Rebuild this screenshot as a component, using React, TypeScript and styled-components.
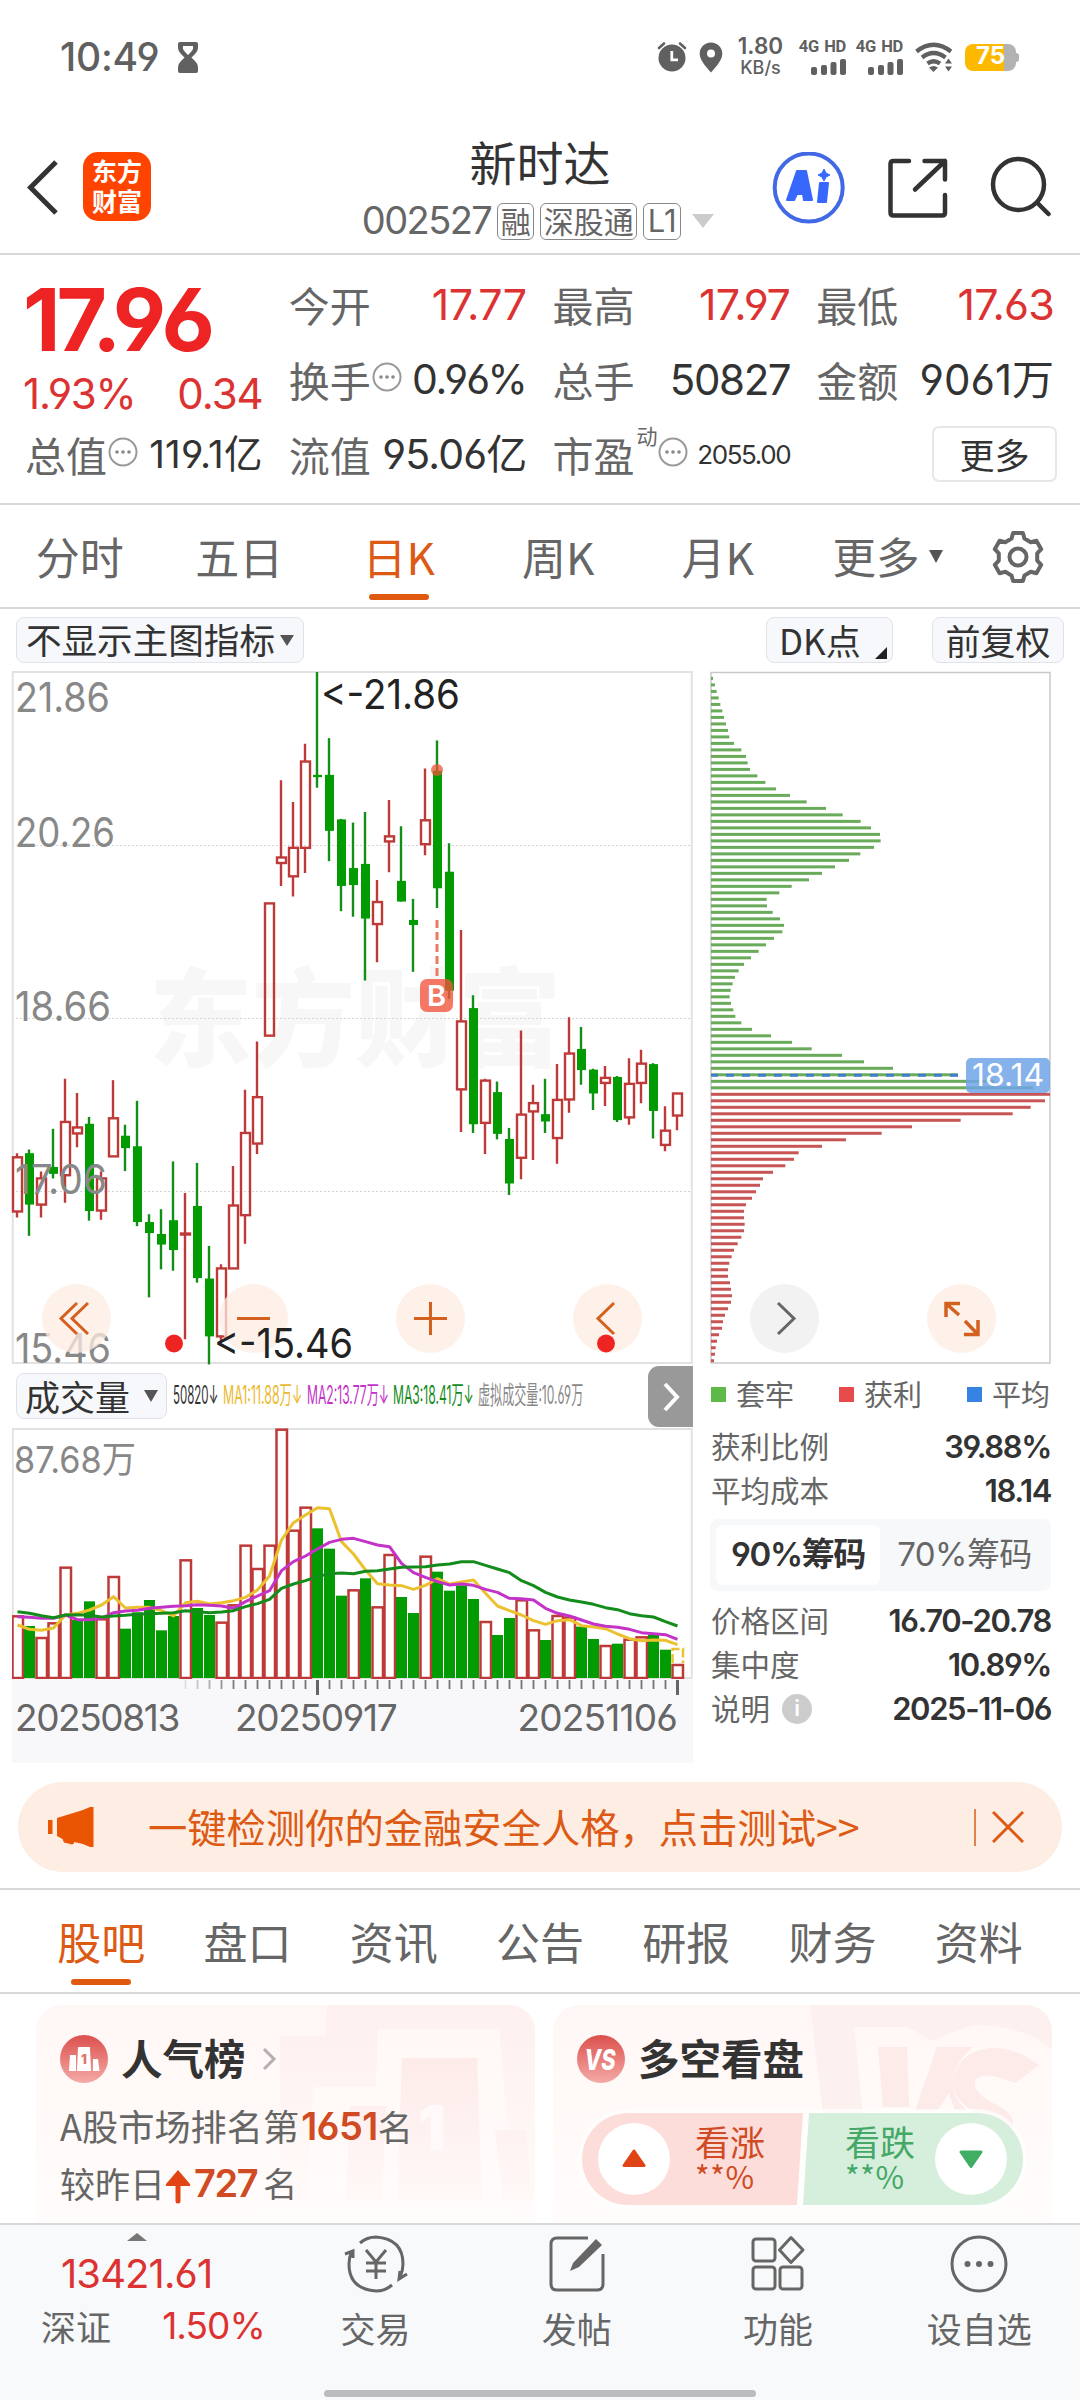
import React from "react";
import styled, { createGlobalStyle } from "styled-components";

const Global = createGlobalStyle`
  * { box-sizing: border-box; }
  body { margin: 0; background: #fff; }
`;

const CN = `"Noto Sans CJK SC", "Noto Sans", sans-serif`;
const LATIN = `Inter, "Noto Sans CJK SC", sans-serif`;

/* ---------- shared pieces ---------- */

const Page = styled.div`
  width: 1080px;
  height: 2400px;
  display: flex;
  flex-direction: column;
  background: #fff;
  overflow: hidden;
  font-family: ${CN};
  color: #333;
`;

const Text = styled.span<{ $size: number; $color?: string; $weight?: number; $ls?: number }>`
  font-family: ${CN};
  font-size: ${(p) => p.$size}px;
  font-weight: ${(p) => p.$weight ?? 400};
  color: ${(p) => p.$color ?? "#666"};
  letter-spacing: ${(p) => p.$ls ?? 0}px;
  line-height: 1;
  padding-bottom: 2px;
  white-space: nowrap;
`;

const Num = styled(Text)`
  font-family: ${LATIN};
  font-feature-settings: "cv03", "cv04";
`;

const Caret = styled.i<{ $w: number; $h: number; $color: string; $up?: boolean }>`
  width: 0;
  height: 0;
  border-left: ${(p) => p.$w / 2}px solid transparent;
  border-right: ${(p) => p.$w / 2}px solid transparent;
  ${(p) => (p.$up ? "border-bottom" : "border-top")}: ${(p) => p.$h}px solid ${(p) => p.$color};
`;

const Chip = styled.button<{ $w: number }>`
  width: ${(p) => p.$w}px;
  height: 46px;
  padding: 0;
  display: flex;
  align-items: center;
  justify-content: center;
  gap: 5px;
  background: #f7f8fb;
  border: 1.5px solid #e2e3e9;
  border-radius: 8px;
`;

/* ---------- status bar ---------- */

const StatusBar = styled.div`
  height: 116px;
  padding: 34px 64px 0 60px;
  display: flex;
  justify-content: space-between;
`;

const StatusSide = styled.div`
  height: 46px;
  display: flex;
  align-items: center;
`;

const Speed = styled.div`
  width: 47px;
  margin-left: 14px;
  display: flex;
  flex-direction: column;
  align-items: center;
`;

const Signal = styled.div`
  width: 48px;
  margin-left: 14px;
  & + & { margin-left: 9px; }
  display: flex;
  flex-direction: column;
  align-items: flex-end;
  gap: 1px;
`;

const Net = styled(Num)`
  font-family: Roboto, Inter, sans-serif;
  word-spacing: 1.5px;
`;

const SignalMark = () => (
  <Signal>
    <Net $size={16.5} $weight={700} $color="#606060" $ls={-0.3}>4G HD</Net>
    <svg width="35" height="16" fill="#606060">
      <rect x="0" y="8" width="6" height="8" rx="2" />
      <rect x="10" y="6" width="6" height="10" rx="2" />
      <rect x="19.500" y="3" width="6" height="13" rx="2" />
      <rect x="29" y="0" width="6" height="16" rx="2" />
    </svg>
  </Signal>
);

const Battery = styled.div`
  width: 51px;
  height: 27px;
  margin-left: 12px;
  border-radius: 8px;
  background: linear-gradient(90deg, #fcb900 39px, #b2b2b2 39px);
  display: flex;
  align-items: center;
  justify-content: center;
  position: relative;
  &::after {
    content: "";
    position: absolute;
    right: -3px;
    top: 9px;
    width: 3px;
    height: 9px;
    border-radius: 0 3px 3px 0;
    background: #b2b2b2;
  }
`;

function Status() {
  return (
    <StatusBar>
      <StatusSide>
        <Num $size={39} $weight={500} $color="#606060" $ls={-0.2}>10:49</Num>
        <svg width="20" height="31" viewBox="0 0 20 31" style={{ marginLeft: 19 }}>
          <path d="M2 0h16q2 0 2 2v4q0 3-3 6l-3.500 3.500 3.500 3.500q3 3 3 6v4q0 2-2 2H2q-2 0-2-2v-4q0-3 3-6l3.500-3.500L3 12Q0 9 0 6V2Q0 0 2 0z" fill="#606060" />
          <path d="M5 4h10v2.500q0 1.500-5 6.500Q5 8 5 6.500z" fill="#fff" />
        </svg>
      </StatusSide>
      <StatusSide>
        <svg width="30" height="30" viewBox="0 0 30 30" fill="#606060">
          <circle cx="15" cy="16" r="13.500" />
          <path d="M2 6l5-4.500M28 6l-5-4.500" stroke="#606060" strokeWidth="2.600" strokeLinecap="round" />
          <path d="M14.800 9v8.800H21" stroke="#fff" strokeWidth="2.800" fill="none" />
        </svg>
        <svg width="24" height="31" viewBox="0 0 24 31" style={{ marginLeft: 12 }}>
          <path d="M12 .5C5.500.5.700 5.500.700 11.500.700 18 6 23.500 12 30.500 18 23.500 23.300 18 23.300 11.500 23.300 5.500 18.500.5 12 .5z" fill="#606060" />
          <circle cx="12" cy="11.500" r="4" fill="#fff" />
        </svg>
        <Speed>
          <Num $size={22.5} $weight={600} $color="#606060">1.80</Num>
          <Num $size={18} $weight={500} $color="#606060">KB/s</Num>
        </Speed>
        <SignalMark />
        <SignalMark />
        <svg width="38" height="30" viewBox="0 0 38 30" style={{ marginLeft: 12 }}>
          <g fill="none" stroke="#606060" strokeWidth="4.200">
            <path d="M1.500 9.500Q18.500-4 36 9.500" />
            <path d="M7 15.500Q18.500 6.500 30.500 15.500" />
            <path d="M12.500 21.500Q18.500 17 25 21.500" />
          </g>
          <path d="M14 25.500Q18.500 22.500 23 25.500L18.500 30z" fill="#606060" />
          <path d="M30 21.500l3.500-5 3.500 5zM30 24.500l3.500 5 3.500-5z" fill="#606060" />
        </svg>
        <Battery>
          <Num $size={24} $weight={700} $color="#fff">75</Num>
        </Battery>
      </StatusSide>
    </StatusBar>
  );
}

/* ---------- header ---------- */

const HeaderBar = styled.header`
  height: 139px;
  display: grid;
  grid-template-columns: 308px 1fr 308px;
  border-bottom: 2px solid #d9d9d9;
`;

const HeaderLeft = styled.div`
  padding: 36px 0 0 27px;
  display: flex;
  align-items: flex-start;
  gap: 24px;
`;

const Logo = styled.div`
  width: 68px;
  height: 69px;
  border-radius: 15px;
  background: #ff4400;
  display: flex;
  flex-direction: column;
  align-items: center;
  justify-content: center;
  gap: 3px;
`;

const HeaderTitle = styled.div`
  display: flex;
  flex-direction: column;
  align-items: center;
  padding-top: 21px;
`;

const CodeRow = styled.div`
  height: 38px;
  margin-top: 16px;
  margin-left: -4px;
  display: flex;
  align-items: center;
  gap: 6px;
`;

const Tag = styled.div<{ $w: number }>`
  width: ${(p) => p.$w}px;
  height: 37px;
  border: 1.5px solid #888;
  border-radius: 6px;
  display: flex;
  align-items: center;
  justify-content: center;
`;

const HeaderActions = styled.div`
  padding: 36px 29px 0 0;
  display: flex;
  justify-content: flex-end;
  align-items: flex-start;
`;

function Header() {
  return (
    <HeaderBar>
      <HeaderLeft>
        <svg width="32" height="70" viewBox="0 0 32 70">
          <path d="M29 10L3.500 35.500 29 61" fill="none" stroke="#333" strokeWidth="5" />
        </svg>
        <Logo>
          <Text $size={25} $weight={700} $color="#fff">东方</Text>
          <Text $size={25} $weight={700} $color="#fff">财富</Text>
        </Logo>
      </HeaderLeft>
      <HeaderTitle>
        <Text $size={47} $color="#333">新时达</Text>
        <CodeRow>
          <Num $size={38} $ls={-1.6}>002527</Num>
          <Tag $w={37}><Text $size={30}>融</Text></Tag>
          <Tag $w={97}><Text $size={30}>深股通</Text></Tag>
          <Tag $w={38}><Num $size={31}>L1</Num></Tag>
          <Caret $w={23} $h={14} $color="#ccc" style={{ marginLeft: 5 }} />
        </CodeRow>
      </HeaderTitle>
      <HeaderActions>
        <svg width="279" height="74" viewBox="0 0 279 74" fill="none">
          <circle cx="36.700" cy="35.500" r="34" stroke="#4169e6" strokeWidth="4" />
          <g fill="#3767fb" stroke="#3767fb" strokeWidth="2" strokeLinejoin="round">
            <path fillRule="evenodd" d="M25 19h9l6 29h-8l-1-6h-6l-3 6h-7zM28 36h2.500l-1-8z" />
            <path d="M48 31h8l-2 19h-8z" />
            <path d="M52 17l2 4 4 2-4 2-2 4-2-4-4-2 4-2z" strokeWidth="1" />
          </g>
          <g stroke="#333" strokeWidth="4.500" strokeLinecap="round" strokeLinejoin="round">
            <path d="M137 9h-15.500q-3 0-3 3v48.500q0 3 3 3h48.500q3 0 3-3V43" />
            <path d="M152.500 9H173v18.500M173 9l-30 28.500" />
            <circle cx="246.500" cy="32.500" r="25.500" />
            <path d="M266 51.500L276.500 62" />
          </g>
        </svg>
      </HeaderActions>
    </HeaderBar>
  );
}

/* ---------- quote summary ---------- */

const Quote = styled.section`
  height: 250px;
  padding: 13px 26px 0;
  display: grid;
  grid-template-columns: repeat(4, 1fr);
  grid-template-rows: 75px 75px 75px;
  column-gap: 27px;
  border-bottom: 2px solid #d9d9d9;
`;

const PriceBox = styled.div`
  grid-row: 1 / span 2;
  display: flex;
  flex-direction: column;
  justify-content: space-between;
  margin-left: -3px;
  padding: 8px 0 1px;
`;

const Cell = styled.div`
  display: flex;
  align-items: center;
  justify-content: space-between;
`;

const LabelGroup = styled.div`
  display: flex;
  align-items: center;
  margin-left: -1px;
`;

const Sup = styled.div`
  align-self: flex-start;
  margin-top: -9px;
  margin-left: 2px;
  width: 20px;
  line-height: 1;
`;

const More = styled.button`
  justify-self: end;
  align-self: center;
  width: 125px;
  height: 56px;
  margin: -4px -3px 0 0;
  padding: 0;
  background: #fff;
  border: 2px solid #e7e7e9;
  border-radius: 7px;
`;

const Hint = () => (
  <svg width="30" height="30" viewBox="0 0 30 30" style={{ marginTop: -8, marginLeft: 1 }}>
    <circle cx="15" cy="15" r="13.500" fill="none" stroke="#999" strokeWidth="2" />
    <g fill="#888"><circle cx="9" cy="15" r="1.800" /><circle cx="15" cy="15" r="1.800" /><circle cx="21" cy="15" r="1.800" /></g>
  </svg>
);

const RED = "#dc3232";

const Label = ({ children }: { children: string }) => (
  <LabelGroup><Text $size={41}>{children}</Text></LabelGroup>
);

function QuotePanel() {
  return (
    <Quote>
      <PriceBox>
        <Num $size={87} $weight={700} $color="#ee2424" $ls={-4}>17.96</Num>
        <Cell>
          <Num $size={42} $color={RED} $ls={-1.2}>1.93%</Num>
          <Num $size={42} $color={RED} $ls={-1}>0.34</Num>
        </Cell>
      </PriceBox>
      <Cell><Label>今开</Label><Num $size={43} $color={RED} $ls={-0.6}>17.77</Num></Cell>
      <Cell><Label>最高</Label><Num $size={43} $color={RED} $ls={-0.6}>17.97</Num></Cell>
      <Cell><Label>最低</Label><Num $size={43} $color={RED} $ls={-0.8}>17.63</Num></Cell>
      <Cell>
        <LabelGroup><Text $size={41}>换手</Text><Hint /></LabelGroup>
        <Num $size={41} $color="#333" $ls={-1.2}>0.96%</Num>
      </Cell>
      <Cell><Label>总手</Label><Num $size={42} $color="#333" $ls={-1.4}>50827</Num></Cell>
      <Cell><Label>金额</Label><Num $size={42} $color="#333" $ls={0}>9061万</Num></Cell>
      <Cell>
        <LabelGroup><Text $size={41}>总值</Text><Hint /></LabelGroup>
        <Num $size={38.5} $color="#333" $ls={0.3}>119.1亿</Num>
      </Cell>
      <Cell><Label>流值</Label><Num $size={41} $color="#333" $ls={-0.8}>95.06亿</Num></Cell>
      <Cell>
        <LabelGroup>
          <Text $size={41}>市盈</Text>
          <Sup><Text $size={21}>动</Text></Sup>
          <Hint />
        </LabelGroup>
        <Num $size={26} $color="#333" $ls={-1.4}>2055.00</Num>
      </Cell>
      <More><Text $size={35} $color="#333">更多</Text></More>
    </Quote>
  );
}

/* ---------- period tabs ---------- */

const PeriodBar = styled.nav`
  height: 104px;
  display: grid;
  grid-template-columns: repeat(5, 159.500px) 1fr 124px;
  border-bottom: 2px solid #d9d9d9;
`;

const Tab = styled.div<{ $on?: boolean }>`
  display: flex;
  flex-direction: column;
  align-items: center;
  padding-top: 29px;
  &::after {
    content: "";
    width: 60px;
    height: 6px;
    margin-top: 14px;
    border-radius: 3px;
    background: ${(p) => (p.$on ? "#df5a10" : "transparent")};
  }
`;

const TabMore = styled.div`
  display: flex;
  align-items: flex-start;
  gap: 9px;
  padding: 29px 0 0 35px;
`;

const GearBox = styled.div`
  padding: 25px 0 0 35px;
`;

const ORANGE = "#dc5a14";

function gearPath() {
  const pts: string[] = [];
  for (let i = 0; i < 6; i++) {
    const a = (i * Math.PI) / 3 - Math.PI / 2;
    const at = (r: number, d: number) => `${(27 + r * Math.cos(a + d)).toFixed(1)} ${(27 + r * Math.sin(a + d)).toFixed(1)}`;
    pts.push(at(19.5, -0.34), at(24.5, -0.2), at(24.5, 0.2), at(19.5, 0.34));
  }
  return `M${pts.join("L")}Z`;
}

function Periods() {
  return (
    <PeriodBar>
      {["分时", "五日", "日K", "周K", "月K"].map((t) => (
        <Tab key={t} $on={t === "日K"}>
          <Text $size={44} $color={t === "日K" ? ORANGE : "#666"}>{t}</Text>
        </Tab>
      ))}
      <TabMore>
        <Text $size={43.5}>更多</Text>
        <Caret $w={15} $h={13} $color="#555" style={{ marginTop: 16 }} />
      </TabMore>
      <GearBox>
        <svg width="54" height="54" fill="none" stroke="#666" strokeWidth="4" strokeLinejoin="round">
          <path d={gearPath()} />
          <circle cx="27" cy="27" r="8.500" />
        </svg>
      </GearBox>
    </PeriodBar>
  );
}

/* ---------- chart toolbar ---------- */

const Toolbar = styled.div`
  height: 62px;
  padding: 8px 16px 0;
  display: flex;
  align-items: flex-start;
`;

const Spacer = styled.div`
  flex: 1;
`;

/* ---------- charts ---------- */

const Charts = styled.section`
  height: 1092px;
  padding: 0 12px;
  display: flex;
  gap: 17px;
`;

const LeftColumn = styled.div`
  width: 681px;
  flex: none;
  display: flex;
  flex-direction: column;
`;

const Plot = styled.div<{ $h: number }>`
  height: ${(p) => p.$h}px;
  position: relative;
  flex: none;
  svg { display: block; }
`;

const RoundButton = styled.button<{ $x: number; $grey?: boolean }>`
  position: absolute;
  left: ${(p) => p.$x}px;
  bottom: 11px;
  width: 69px;
  height: 69px;
  padding: 0;
  border: 0;
  border-radius: 50%;
  background: ${(p) => (p.$grey ? "#f2f2f2" : "rgba(254, 236, 225, 0.75)")};
  svg { display: block; fill: none; stroke: ${(p) => (p.$grey ? "#666" : "#d4601f")}; stroke-width: 3px; }
`;

type Candle = ["r" | "g", number, number, number, number];

/* colour, high, body top, body bottom, low */
const candles: Candle[] = [
  ["r", 1074, 1083, 1201, 1214], ["g", 1066, 1074, 1186, 1254], ["r", 1114, 1129, 1186, 1214], ["g", 1021, 1104, 1119, 1129],
  ["r", 912, 1006, 1122, 1182], ["r", 943, 1018, 1031, 1061], ["g", 995, 1010, 1200, 1221], ["r", 1114, 1129, 1199, 1219],
  ["r", 915, 998, 1081, 1081], ["g", 1012, 1036, 1063, 1113], ["g", 960, 1059, 1224, 1233], ["g", 1207, 1224, 1248, 1388],
  ["g", 1196, 1250, 1273, 1327], ["g", 1092, 1220, 1285, 1330], ["r", 1161, 1249, 1251, 1479], ["g", 1095, 1189, 1346, 1356],
  ["g", 1276, 1347, 1473, 1534], ["r", 1316, 1325, 1473, 1487], ["r", 1102, 1188, 1325, 1325], ["r", 936, 1030, 1209, 1271],
  ["r", 831, 952, 1053, 1076], ["r", 530, 530, 818, 818], ["r", 262, 430, 442, 492], ["r", 309, 409, 471, 515],
  ["r", 182, 221, 409, 464], ["g", 26, 250, 255, 278], ["g", 170, 250, 372, 438], ["g", 346, 347, 492, 547],
  ["g", 354, 453, 490, 559], ["g", 331, 444, 563, 698], ["r", 479, 527, 575, 658], ["r", 305, 384, 395, 462],
  ["g", 362, 481, 526, 526], ["g", 520, 566, 577, 679], ["r", 236, 349, 401, 425], ["g", 175, 241, 497, 540],
  ["g", 399, 461, 720, 738], ["r", 588, 787, 935, 1028], ["g", 730, 758, 1011, 1030], ["r", 912, 916, 1008, 1076],
  ["g", 918, 941, 1032, 1044], ["g", 1019, 1043, 1140, 1165], ["r", 807, 990, 1084, 1131], ["r", 925, 965, 983, 1089],
  ["g", 912, 989, 1005, 1030], ["r", 880, 958, 1041, 1097], ["r", 778, 857, 957, 986], ["g", 799, 847, 893, 925],
  ["g", 890, 892, 944, 980], ["r", 884, 910, 921, 971], ["g", 906, 908, 1002, 1006], ["r", 867, 923, 996, 1012],
  ["r", 849, 879, 921, 965], ["g", 878, 880, 982, 1042], ["r", 972, 1025, 1056, 1070], ["r", 943, 944, 992, 1024],
];

const priceY = (v: number) => (v - 26) / 2.178 + 1;

const gridLabels: [string, number, number][] = [
  ["21.86", 40.5, 93], ["20.26", 175.5, 98], ["18.66", 349.5, 94], ["17.06", 523, 90], ["15.46", 692, 94],
];

const Overlay = styled.svg`
  position: absolute;
  left: 0;
  top: 0;
  overflow: visible;
  pointer-events: none;
`;

function PriceChart() {
  return (
    <Plot $h={693}>
      <svg width="681" height="693" fontFamily={LATIN} style={{ overflow: "visible" }}>
        <text x="137" y="387" fontSize="107" fontWeight="900" fontFamily={CN} fill="#f7f7f7" textLength="412" lengthAdjust="spacingAndGlyphs">东方财富</text>
        {[174, 347, 520].map((y) => (
          <line key={y} x1="0" x2="680" y1={y + 0.5} y2={y + 0.5} stroke="#d4d4d4" strokeDasharray="2 2" />
        ))}
        <rect x="0.750" y="1" width="679" height="691" fill="none" stroke="#e2e2e4" strokeWidth="2" />
        {candles.map(([c, hi, top, bot, lo], i) => {
          const x = 5 + i * 12;
          const t = priceY(top), b = priceY(bot);
          return c === "g" ? (
            <g key={i} fill="#029c02">
              <rect x={x - 1.2} y={priceY(hi)} width="2.400" height={priceY(lo) - priceY(hi)} fill="#128f16" />
              <rect x={x - 4} y={t} width="9" height={b - t} />
            </g>
          ) : (
            <g key={i} stroke="#be3a38" strokeWidth="2.400" fill="none">
              <path d={`M${x} ${priceY(hi)}V${t}M${x} ${b}V${priceY(lo)}`} />
              <rect x={x - 4} y={t} width="9" height={Math.max(b - t, 1)} />
            </g>
          );
        })}
        {gridLabels.map(([t, y, w]) => (
          <text key={t} x="3" y={y} fontSize="41" fill="#888" textLength={w + 2} lengthAdjust="spacingAndGlyphs">{t}</text>
        ))}
        <text x="309" y="38" fontSize="41" fill="#222" textLength="139" lengthAdjust="spacingAndGlyphs">&lt;-21.86</text>
        <circle cx="425" cy="99" r="6" fill="#ee5535" opacity=".75" />
        <path d="M425 249v56" stroke="#ee7a66" strokeWidth="3" strokeDasharray="8 4" />
        <rect x="408" y="308" width="33" height="33" rx="7" fill="#f4533d" opacity=".78" />
        <text x="424.500" y="335" fontSize="29" fontWeight="600" fill="#fff" textAnchor="middle">B</text>
      </svg>
      <RoundButton $x={30}><svg width="69" height="69"><path d="M35 19L19 34.500 35 50M46 19L30 34.500 46 50" /></svg></RoundButton>
      <RoundButton $x={207}><svg width="69" height="69"><path d="M18 34.500h33" /></svg></RoundButton>
      <RoundButton $x={384}><svg width="69" height="69"><path d="M18 34.500h33M34.500 18v33" /></svg></RoundButton>
      <RoundButton $x={561}><svg width="69" height="69"><path d="M41 19L25 34.500 41 50" /></svg></RoundButton>
      <Overlay width="681" height="693" fontFamily={LATIN}>
        <text x="202" y="687" fontSize="41" fill="#222" textLength="139" lengthAdjust="spacingAndGlyphs">&lt;-15.46</text>
        <circle cx="162" cy="672.500" r="9" fill="#ee2422" />
        <circle cx="594" cy="672.500" r="9" fill="#ee2422" />
      </Overlay>
    </Plot>
  );
}

const IndicatorRow = styled.div`
  height: 64px;
  padding-left: 4px;
  display: flex;
  align-items: center;
`;

const Squeezed = styled.div<{ $w: number; $k: number }>`
  width: ${(p) => p.$w}px;
  margin-left: 6px;
  flex: none;
  & > span {
    display: inline-block;
    transform: scaleX(${(p) => p.$k});
    transform-origin: left center;
  }
`;

const NextTab = styled.button`
  align-self: stretch;
  width: 45px;
  margin: 2px 0 1px auto;
  padding: 0;
  border: 0;
  border-radius: 11px 0 0 11px;
  background: #999;
  position: relative;
  svg { display: block; margin: auto; }
`;

const volumes =
  "r766 g798 r831 r787 r620 g780 g724 r775 r648 g806 g757 g720 g811 g768 r598 g744 g765 r785 r733 r554 r624 r554 r206 r509 r440 g505 g566 g707 r688 g655 r739 r582 g711 g759 r587 g635 g692 g676 g717 r783 g825 g774 r718 r808 g840 r765 r770 g800 g837 r855 g851 r836 r829 g824 g869 r912"
    .split(" ")
    .map((s) => ({ up: s[0] === "r", v: Number(s.slice(1)) }));

const averages: [string, number[]][] = [
  ["#ecc12f", [795, 808, 811, 804, 765, 760, 750, 735, 710, 744, 742, 742, 752, 768, 728, 724, 732, 728, 722, 712, 690, 648, 540, 488, 465, 443, 446, 545, 582, 630, 671, 675, 677, 688, 676, 656, 672, 666, 660, 700, 738, 752, 765, 782, 793, 782, 779, 797, 801, 806, 822, 836, 842, 840, 841, 854]],
  ["#c433c8", [770, 772, 775, 775, 765, 779, 779, 775, 758, 753, 751, 745, 742, 739, 737, 734, 736, 738, 745, 725, 708, 692, 632, 605, 588, 567, 547, 538, 535, 545, 555, 560, 610, 638, 652, 665, 675, 672, 676, 688, 697, 715, 716, 720, 745, 760, 768, 780, 792, 799, 802, 808, 818, 821, 824, 838]],
  ["#148c1c", [755, 760, 767, 773, 765, 764, 766, 771, 768, 766, 763, 761, 760, 758, 752, 755, 758, 756, 752, 740, 731, 718, 685, 672, 662, 650, 641, 639, 641, 634, 632, 627, 622, 621, 620, 615, 612, 605, 605, 616, 627, 638, 662, 677, 697, 711, 720, 726, 733, 743, 749, 761, 767, 771, 785, 798]],
];

const volY = (v: number) => (v - 204) / 3;

function VolumeChart() {
  return (
    <Plot $h={251}>
      <svg width="681" height="251" fontFamily={LATIN}>
        <rect x="0.750" y="1" width="679" height="249" fill="none" stroke="#e2e2e4" strokeWidth="2" />
        <text x="2" y="44.500" fontSize="37" fill="#888" textLength="122" lengthAdjust="spacingAndGlyphs">87.68万</text>
        {volumes.map(({ up, v }, i) => {
          const x = 5.5 + i * 12;
          return up ? (
            <rect key={i} x={x - 5} y={volY(v) + 1} width="10.500" height={249 - volY(v)} fill="#fff" stroke="#be3a38" strokeWidth="2.500" />
          ) : (
            <rect key={i} x={x - 5.5} y={volY(v)} width="11" height={250 - volY(v)} fill="#029c02" />
          );
        })}
        <path d="M660.500 235v-14h10.500v14" fill="none" stroke="#ecc12f" strokeWidth="2.500" strokeDasharray="9 3" />
        {averages.map(([c, vs]) => (
          <polyline key={c} fill="none" stroke={c} strokeWidth="3" strokeLinejoin="round"
            points={vs.map((v, i) => `${5.5 + i * 12},${volY(v)}`).join(" ")} />
        ))}
      </svg>
    </Plot>
  );
}

const Axis = styled.div`
  height: 84px;
  background: #f8f8fa;
  svg { display: block; }
`;

const AxisLabels = styled.div`
  display: flex;
  padding: 3px 16px 0 3px;
`;

function TimeAxis() {
  return (
    <Axis>
      <svg width="681" height="17">
        {volumes.map((_, i) => {
          if (i < 14) return null;
          const major = i === 25 || i === 55;
          return (
            <line key={i} x1={5.5 + i * 12} x2={5.5 + i * 12} y1="1" y2={major ? 16 : 10}
              stroke="#666" strokeWidth={major ? 3 : 1.8} opacity={major ? 1 : Math.min(0.9, (i - 13) * 0.17)} />
          );
        })}
      </svg>
      <AxisLabels>
        <Num $size={37} $ls={-1.4}>20250813</Num>
        <Num $size={37} $ls={-1.3} style={{ marginLeft: 56 }}>20250917</Num>
        <Spacer />
        <Num $size={37} $ls={-0.8}>20251106</Num>
      </AxisLabels>
    </Axis>
  );
}

/* ---------- chip distribution ---------- */

const RightColumn = styled.div`
  width: 341px;
  flex: none;
  display: flex;
  flex-direction: column;
`;

const trapped = [69, 75, 80, 86, 91, 97, 102, 108, 114, 118, 132, 154, 168, 173, 180, 202, 226, 258, 300, 350, 408, 458, 512, 543, 570, 572, 552, 511, 477, 435, 396, 357, 305, 268, 230, 231, 248, 270, 282, 277, 252, 228, 206, 183, 162, 146, 135, 128, 122, 119, 123, 130, 136, 154, 186, 243, 306, 365, 456, 522, 609, 804, 912, 1029];
const profit = [1080, 1065, 1022, 968, 812, 666, 575, 468, 396, 326, 312, 286, 249, 219, 210, 198, 186, 168, 162, 162, 164, 162, 154, 143, 132, 125, 118, 114, 114, 120, 123, 126, 123, 114, 105, 99, 96, 87, 81, 77, 75, 72];

function ChipChart() {
  const bars = [...trapped, ...profit];
  return (
    <Plot $h={693}>
      <svg width="341" height="693" fontFamily={LATIN}>
        <rect x="1" y="1.500" width="339" height="690.500" fill="none" stroke="#c9c9cb" strokeWidth="1.500" />
        {bars.map((v, i) => (
          <rect key={i} x="1" y={priceY(40 + i * 14.153) - 1.5} width={(v - 63) / 3} height="3"
            fill={i < trapped.length ? "#69ab5a" : "#c85555"} />
        ))}
        <path d="M1 404.200h247" stroke="#3e80cc" strokeWidth="3" strokeDasharray="8 8" strokeDashoffset="1" />
        <rect x="256" y="387" width="84" height="35" rx="5" fill="#6fa3e8" opacity=".84" />
        <text x="262" y="415" fontSize="31" fill="#fff" textLength="72" lengthAdjust="spacingAndGlyphs">18.14</text>
      </svg>
      <RoundButton $x={40} $grey><svg width="69" height="69"><path d="M28 19l16 15.500L28 50" /></svg></RoundButton>
      <RoundButton $x={217}>
        <svg width="69" height="69"><path d="M19 33V19.500H33M19 19.500l13 11.500M38 37l13 13.500M51 36v14.500H37" strokeWidth="3.500" /></svg>
      </RoundButton>
    </Plot>
  );
}

const Legend = styled.div`
  height: 61px;
  padding: 0 1px 0 1px;
  display: flex;
  align-items: center;
  justify-content: space-between;
`;

const LegendItem = styled.div<{ $color: string }>`
  display: flex;
  align-items: center;
  gap: 10px;
  &::before {
    content: "";
    width: 15px;
    height: 15px;
    background: ${(p) => p.$color};
  }
`;

const InfoRow = styled.div`
  height: 44px;
  padding: 0 0 0 2px;
  display: flex;
  align-items: center;
  justify-content: space-between;
`;

const Segment = styled.div`
  height: 72px;
  margin: 6px 0 8px 0;
  padding: 6px;
  display: grid;
  grid-template-columns: 164px 1fr;
  border-radius: 8px;
  background: #f7f8fa;
`;

const SegmentItem = styled.div<{ $on?: boolean }>`
  padding-left: ${(p) => (p.$on ? 0 : 4)}px;
  display: flex;
  align-items: center;
  justify-content: center;
  border-radius: 7px;
  background: ${(p) => (p.$on ? "#fff" : "transparent")};
`;

const InfoBadge = styled.span`
  width: 30px;
  height: 30px;
  margin-left: 12px;
  border-radius: 50%;
  background: #ccc;
  display: flex;
  align-items: center;
  justify-content: center;
`;

function Row({ label, value, badge }: { label: string; value: string; badge?: boolean }) {
  return (
    <InfoRow>
      <LabelGroup>
        <Text $size={29.5}>{label}</Text>
        {badge && <InfoBadge><Num $size={22} $weight={600} $color="#fff">i</Num></InfoBadge>}
      </LabelGroup>
      <Num $size={31} $weight={600} $color="#333" $ls={-1.4}>{value}</Num>
    </InfoRow>
  );
}

function ChipPanel() {
  return (
    <RightColumn>
      <ChipChart />
      <Legend>
        <LegendItem $color="#5dba49"><Text $size={29}>套牢</Text></LegendItem>
        <LegendItem $color="#e84b4b"><Text $size={29}>获利</Text></LegendItem>
        <LegendItem $color="#3783e4"><Text $size={29}>平均</Text></LegendItem>
      </Legend>
      <Row label="获利比例" value="39.88%" />
      <Row label="平均成本" value="18.14" />
      <Segment>
        <SegmentItem $on><Num $size={33} $weight={600} $color="#333" $ls={-1.4}>90%筹码</Num></SegmentItem>
        <SegmentItem><Num $size={33} $ls={-0.6}>70%筹码</Num></SegmentItem>
      </Segment>
      <Row label="价格区间" value="16.70-20.78" />
      <Row label="集中度" value="10.89%" />
      <Row label="说明" value="2025-11-06" badge />
    </RightColumn>
  );
}

/* ---------- banner ---------- */

const Banner = styled.div`
  height: 90px;
  margin: 19px 18px 16px;
  padding: 0 38px 0 30px;
  border-radius: 45px;
  background: #fdede3;
  display: flex;
  align-items: center;
`;

const BannerText = styled(Text)`
  margin-left: 54px;
  flex: 1;
`;

const BannerRule = styled.i`
  width: 2px;
  height: 37px;
  margin-right: 16px;
  background: #e0824c;
`;

/* ---------- section tabs ---------- */

const SectionBar = styled.nav`
  height: 106px;
  padding: 0 28px;
  display: grid;
  grid-template-columns: repeat(7, 1fr);
  border-top: 2px solid #d9d9d9;
  border-bottom: 2px solid #d9d9d9;
`;

/* ---------- cards ---------- */

const Cards = styled.section`
  height: 229px;
  padding: 11px 28px 0 36px;
  display: grid;
  grid-template-columns: 1fr 1fr;
  gap: 18px;
  overflow: hidden;
`;

const Card = styled.div`
  height: 240px;
  padding: 30px 24px 0;
  border-radius: 26px;
  background: linear-gradient(180deg, #fff7f5, #fffdfc);
  position: relative;
  overflow: hidden;
`;

const CardArt = styled.svg`
  position: absolute;
  left: 0;
  top: 0;
`;

const CardHead = styled.div`
  height: 48px;
  display: flex;
  align-items: center;
  position: relative;
`;

const CardLine = styled.div`
  height: 57px;
  display: flex;
  align-items: center;
  position: relative;
`;

const CardTitle = styled(Text)`
  margin: 0 16px 0 13px;
`;

const Votes = styled.div`
  height: 100px;
  width: 449px;
  margin: 26px 0 0 1px;
  padding: 4px;
  border-radius: 50px;
  background: rgba(255, 255, 255, 0.7);
  display: flex;
  position: relative;
`;

const Vote = styled.div<{ $up?: boolean }>`
  width: ${(p) => (p.$up ? 221 : 226)}px;
  margin-left: ${(p) => (p.$up ? 0 : -6)}px;
  padding: ${(p) => (p.$up ? "0 0 0 16px" : "0 16px 0 48px")};
  border-radius: ${(p) => (p.$up ? "46px 0 0 46px" : "0 46px 46px 0")};
  clip-path: ${(p) => (p.$up ? "polygon(0 0, 100% 0, 215px 100%, 0 100%)" : "polygon(12px 0, 100% 0, 100% 100%, 6px 100%)")};
  background: ${(p) => (p.$up ? "#fdddd9" : "#d6eedc")};
  display: flex;
  align-items: center;
  justify-content: ${(p) => (p.$up ? "flex-start" : "space-between")};
  gap: ${(p) => (p.$up ? 25 : 0)}px;
`;

const VoteKnob = styled.div`
  width: 72px;
  height: 72px;
  border-radius: 50%;
  background: #fff;
  display: flex;
  align-items: center;
  justify-content: center;
  flex: none;
`;

const VoteText = styled.div`
  display: flex;
  flex-direction: column;
  margin-top: -3px;
`;

const VERMILION = "#d04a24";
const LEAF = "#45a867";

function RankCard() {
  return (
    <Card>
      <CardArt width="499" height="220">
        <defs>
          <linearGradient id="fade" x1="0" y1="0" x2="0" y2="1">
            <stop offset="0" stopColor="#fdebe9" />
            <stop offset="1" stopColor="#fff9f8" />
          </linearGradient>
        </defs>
        <g fill="url(#fade)">
          <path opacity=".55" d="M291 0H499V190H478L463 24H342L340 82H278L270 196H243L244 31H289z" />
          <path d="M314 101h36l-4 95h-36zM366 53h75l5 143h-85zM459 125h31l6 71h-29z" />
        </g>
        <text x="382" y="145" fontFamily={LATIN} fontSize="62" fontWeight="900" fill="#fffaf9">1</text>
      </CardArt>
      <CardHead>
        <svg width="48" height="48">
          <defs>
            <linearGradient id="medal" x1="0" y1="0" x2="0" y2="1">
              <stop offset="0" stopColor="#dc504d" />
              <stop offset="1" stopColor="#f4aaa6" />
            </linearGradient>
          </defs>
          <circle cx="24" cy="24" r="24" fill="url(#medal)" />
          <path d="M10 20h6v16H9zM18 12h12l1 24H17zM33 24h5l1.500 12H33z" fill="#fff" />
          <text x="24" y="29" fontFamily={LATIN} fontSize="13" fontWeight="900" fill="#e07570" textAnchor="middle">1</text>
        </svg>
        <CardTitle $size={41.5} $weight={700} $color="#333">人气榜</CardTitle>
        <svg width="16" height="24"><path d="M2 2l10 10L2 22" fill="none" stroke="#b5b0b0" strokeWidth="3" /></svg>
      </CardHead>
      <CardLine style={{ marginTop: 15 }}>
        <Text $size={36.2}>A股市场排名第</Text>
        <Num $size={38} $weight={600} $color={VERMILION} $ls={-0.6} style={{ marginLeft: 2 }}>1651</Num>
        <Text $size={35}>名</Text>
      </CardLine>
      <CardLine>
        <Text $size={35}>较昨日</Text>
        <svg width="26" height="34" fill="#e34416" style={{ marginTop: 6 }}><path d="M13 0L25 14q1 2-1.500 2H15.500v15q0 2.500-2.500 2.500T10.500 31V16H2.500Q0 16 1 14z" /></svg>
        <Num $size={38} $weight={600} $color={VERMILION} $ls={-1.4} style={{ margin: "0 6px 0 3px" }}>727</Num>
        <Text $size={34}>名</Text>
      </CardLine>
    </Card>
  );
}

function VoteCard() {
  return (
    <Card>
      <CardArt width="499" height="220">
        <path d="M257 0H499V44Q470 20 420 20L378 36 355 22H301L310 110H270z" fill="#fdf1ef" />
        <path d="M325 42h29l2 60H330zM384 42h36Q402 56 400 76Q398 92 415 106H402L396 88 384 106H362z" fill="#fcebe9" />
        <path d="M486 60Q462 42 438 43Q405 46 400 76Q398 92 420 106L455 130Q470 112 440 98Q420 88 422 76Q428 64 462 78z" fill="#fcebe9" />
      </CardArt>
      <CardHead>
        <svg width="48" height="48">
          <circle cx="24" cy="24" r="24" fill="url(#medal)" />
          <text x="23" y="35" fontFamily={LATIN} fontSize="29" fontWeight="800" fontStyle="italic" fill="#fff" textAnchor="middle" textLength="31" lengthAdjust="spacingAndGlyphs">VS</text>
        </svg>
        <CardTitle $size={41.5} $weight={700} $color="#333">多空看盘</CardTitle>
      </CardHead>
      <Votes>
        <Vote $up>
          <VoteKnob><svg width="24" height="20"><path d="M12 2L22 16.500H2z" fill="#e04416" stroke="#e04416" strokeWidth="3" strokeLinejoin="round" /></svg></VoteKnob>
          <VoteText>
            <Text $size={35} $color={VERMILION}>看涨</Text>
            <Text $size={31} $color={VERMILION} $ls={0.8}>**%</Text>
          </VoteText>
        </Vote>
        <Vote>
          <VoteText>
            <Text $size={35} $color={LEAF}>看跌</Text>
            <Text $size={31} $color={LEAF} $ls={0.8}>**%</Text>
          </VoteText>
          <VoteKnob><svg width="24" height="20"><path d="M12 17.500L22 3H2z" fill="#3fae62" stroke="#3fae62" strokeWidth="3" strokeLinejoin="round" /></svg></VoteKnob>
        </Vote>
      </Votes>
    </Card>
  );
}

/* ---------- bottom navigation ---------- */

const BottomNav = styled.footer`
  flex: 1;
  border-top: 2px solid #d6d8da;
  background: #f8f9fb;
  display: flex;
  flex-direction: column;
  justify-content: space-between;
`;

const NavItems = styled.div`
  display: grid;
  grid-template-columns: 275px repeat(4, 201.250px);
`;

const IndexBox = styled.div`
  padding: 8px 10px 0 41px;
  display: flex;
  flex-direction: column;
`;

const IndexRow = styled.div`
  display: flex;
  align-items: center;
  justify-content: space-between;
  margin-top: 11px;
`;

const NavItem = styled.div`
  padding-top: 9px;
  display: flex;
  flex-direction: column;
  align-items: center;
  gap: 16px;
  svg { fill: none; stroke: #666; stroke-width: 3px; }
`;

const HomeBar = styled.i`
  width: 432px;
  height: 7px;
  margin: 0 auto 3px;
  border-radius: 4px;
  background: #bbbcbe;
`;

function Footer() {
  return (
    <BottomNav>
      <NavItems>
        <IndexBox>
          <Caret $w={21} $h={8} $color="#777" $up style={{ marginLeft: 86 }} />
          <Num $size={40} $color="#dc3232" $ls={-0.9} style={{ margin: "13px 0 0 20px" }}>13421.61</Num>
          <IndexRow>
            <Text $size={35}>深证</Text>
            <Num $size={37} $color="#dc3232" $ls={-0.9}>1.50%</Num>
          </IndexRow>
        </IndexBox>
        <NavItem>
          <svg width="66" height="60" viewBox="0 0 66 60">
            <path d="M17 9Q24 3 33 3Q60 5 60 30Q60 37 57 43M64 40L56 45 57 37M49 51Q42 57 33 57Q6 55 6 30Q6 23 9 17M2 20l8-3v7" />
            <path d="M23 16l10 12 10-12M33 28v17M23 29h20M23 37h20" />
          </svg>
          <Text $size={35}>交易</Text>
        </NavItem>
        <NavItem>
          <svg width="66" height="60" viewBox="0 0 66 60">
            <path d="M44 4H13q-6 0-6 6v40q0 6 6 6h40q6 0 6-6V20" />
            <path d="M26 37l3-8L52 5l6 6-23 22z" stroke="none" style={{ fill: "#666" }} />
          </svg>
          <Text $size={35}>发帖</Text>
        </NavItem>
        <NavItem>
          <svg width="66" height="60" viewBox="0 0 66 60">
            <rect x="8" y="5" width="22" height="22" rx="3" />
            <path d="M46 3.500L58 16 46 28.500 34.500 16z" strokeLinejoin="round" />
            <rect x="8" y="33" width="22" height="22" rx="3" />
            <rect x="35" y="33" width="22" height="22" rx="3" />
          </svg>
          <Text $size={35}>功能</Text>
        </NavItem>
        <NavItem>
          <svg width="66" height="60" viewBox="0 0 66 60">
            <circle cx="33" cy="30" r="27" />
            <path d="M21.500 30h.01M33 30h.01M44.500 30h.01" strokeLinecap="round" style={{ strokeWidth: 6 }} />
          </svg>
          <Text $size={35}>设自选</Text>
        </NavItem>
      </NavItems>
      <HomeBar />
    </BottomNav>
  );
}

/* ---------- page ---------- */

const DkChip = styled(Chip)`
  justify-content: space-between;
  align-items: flex-end;
  padding: 0 5px 3px 12px;
`;

const legendItems: [string, string, number, number][] = [
  ["50820↓", "#333", 44, 0.46],
  ["MA1:11.88万↓", "#ecb92f", 78, 0.495],
  ["MA2:13.77万↓", "#c433c8", 80, 0.485],
  ["MA3:18.41万↓", "#148c1c", 79, 0.485],
  ["虚拟成交量:10.69万", "#888", 104, 0.483],
];

export default function App() {
  return (
    <Page>
      <Global />
      <Status />
      <Header />
      <QuotePanel />
      <Periods />
      <Toolbar>
        <Chip $w={288}><Text $size={35.6} $color="#333">不显示主图指标</Text><Caret $w={15} $h={11} $color="#555" /></Chip>
        <Spacer />
        <DkChip $w={127}>
          <Text $size={35} $color="#333">DK点</Text>
          <svg width="12" height="12"><path d="M12 0v12H0z" fill="#222" /></svg>
        </DkChip>
        <Chip $w={132} style={{ marginLeft: 39 }}><Text $size={35} $color="#333">前复权</Text></Chip>
      </Toolbar>
      <Charts>
        <LeftColumn>
          <PriceChart />
          <IndicatorRow>
            <Chip $w={151} style={{ gap: 14 }}><Text $size={35} $color="#333">成交量</Text><Caret $w={15} $h={12} $color="#555" /></Chip>
            {legendItems.map(([t, c, w, k]) => (
              <Squeezed key={t} $w={w} $k={k}><Num $size={25} $color={c}>{t}</Num></Squeezed>
            ))}
            <NextTab><svg width="20" height="32"><path d="M4 3l12 13L4 29" fill="none" stroke="#fff" strokeWidth="4" /></svg></NextTab>
          </IndicatorRow>
          <VolumeChart />
          <TimeAxis />
        </LeftColumn>
        <ChipPanel />
      </Charts>
      <Banner>
        <svg width="46" height="40" viewBox="0 0 46 40" fill="#ea5504">
          <path d="M0 13h4.500v14H0zM9 11l26-8 7-3h3.500v40H42l-7-3-9-2v1.500l-2 1-8-2-1.500-3.500L9 29z" />
        </svg>
        <BannerText $size={39.3} $color={ORANGE}>一键检测你的金融安全人格，点击测试&gt;&gt;</BannerText>
        <BannerRule />
        <svg width="32" height="32"><path d="M1 1l30 30M31 1L1 31" stroke="#dc5a14" strokeWidth="3" /></svg>
      </Banner>
      <SectionBar>
        {["股吧", "盘口", "资讯", "公告", "研报", "财务", "资料"].map((t) => (
          <Tab key={t} $on={t === "股吧"}>
            <Text $size={44} $color={t === "股吧" ? ORANGE : "#666"}>{t}</Text>
          </Tab>
        ))}
      </SectionBar>
      <Cards>
        <RankCard />
        <VoteCard />
      </Cards>
      <Footer />
    </Page>
  );
}
